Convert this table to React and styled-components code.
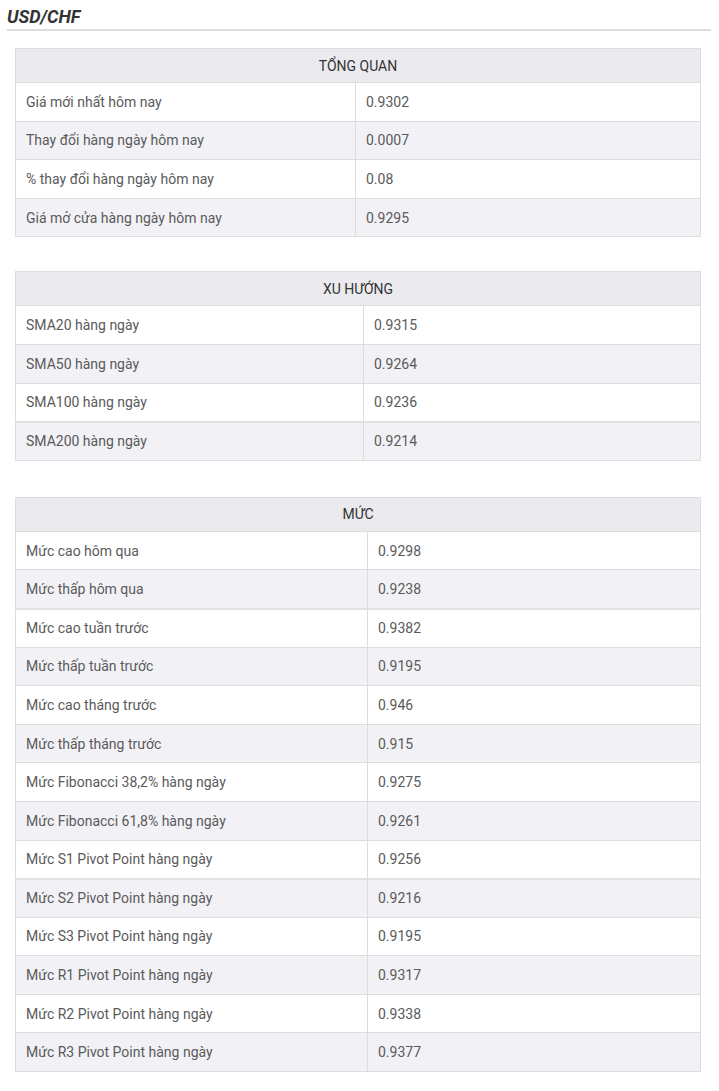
import React from "react";
import styled, { createGlobalStyle } from "styled-components";

const Global = createGlobalStyle`
  html, body { margin: 0; padding: 0; background: #fff; }
  body { font-family: Roboto, "Noto Sans", Arial, sans-serif; color: #555; }
`;

const Page = styled.div`
  padding: 5px 8px 20px 7px;
`;

const Title = styled.h2`
  margin: 0;
  padding: 0;
  font-size: 18px;
  line-height: 24px;
  font-weight: 700;
  font-style: italic;
  color: #333;
  border-bottom: 2px solid #dcdcdc;
`;

const Sections = styled.div`
  display: flex;
  flex-direction: column;
  padding: 17px 10px 0 8px;
`;

const Table = styled.table`
  width: 100%;
  margin-top: ${(p) => p.$gap || 0}px;
  border-collapse: collapse;
  font-size: 14px;
  border: 1px solid #dddddd;
  table-layout: fixed;
`;

const Head = styled.th`
  height: 33px;
  padding: 0 10px;
  background: #ebebef;
  color: #333;
  font-weight: 400;
  text-transform: uppercase;
  text-align: center;
  border-bottom: 1px solid #dddddd;
`;

const Row = styled.tr`
  background: ${(p) => (p.$odd ? "#f2f2f6" : "#ffffff")};
  & > td {
    border-top: ${(p) => (p.$thick ? "2px solid #e2e2e6" : "1px solid #dddddd")};
    height: ${(p) => (p.$thick ? "36.6px" : "37.6px")};
  }
`;

const Cell = styled.td`
  padding: 0 10px;
  color: #5a5a5a;
  line-height: 20px;
  vertical-align: middle;
  & + & {
    border-left: 1px solid #dddddd;
  }
`;

const data = [
  {
    title: "Tổng quan",
    w: 340,
    gap: 0,
    rows: [
      ["Giá mới nhất hôm nay", "0.9302"],
      ["Thay đổi hàng ngày hôm nay", "0.0007"],
      ["% thay đổi hàng ngày hôm nay", "0.08"],
      ["Giá mở cửa hàng ngày hôm nay", "0.9295"],
    ],
  },
  {
    title: "Xu hướng",
    w: 348,
    gap: 34,
    rows: [
      ["SMA20 hàng ngày", "0.9315"],
      ["SMA50 hàng ngày", "0.9264"],
      ["SMA100 hàng ngày", "0.9236"],
      ["SMA200 hàng ngày", "0.9214", true],
    ],
  },
  {
    title: "Mức",
    w: 352,
    gap: 36,
    rows: [
      ["Mức cao hôm qua", "0.9298"],
      ["Mức thấp hôm qua", "0.9238"],
      ["Mức cao tuần trước", "0.9382", true],
      ["Mức thấp tuần trước", "0.9195"],
      ["Mức cao tháng trước", "0.946"],
      ["Mức thấp tháng trước", "0.915"],
      ["Mức Fibonacci 38,2% hàng ngày", "0.9275"],
      ["Mức Fibonacci 61,8% hàng ngày", "0.9261"],
      ["Mức S1 Pivot Point hàng ngày", "0.9256"],
      ["Mức S2 Pivot Point hàng ngày", "0.9216", true],
      ["Mức S3 Pivot Point hàng ngày", "0.9195"],
      ["Mức R1 Pivot Point hàng ngày", "0.9317"],
      ["Mức R2 Pivot Point hàng ngày", "0.9338"],
      ["Mức R3 Pivot Point hàng ngày", "0.9377"],
    ],
  },
];

export default function App() {
  return (
    <Page>
      <Global />
      <Title>USD/CHF</Title>
      <Sections>
        {data.map((t) => (
          <Table key={t.title} $gap={t.gap}>
            <colgroup>
              <col style={{ width: t.w }} />
              <col />
            </colgroup>
            <thead>
              <tr>
                <Head colSpan={2}>{t.title}</Head>
              </tr>
            </thead>
            <tbody>
              {t.rows.map(([k, v, thick], i) => (
                <Row key={k} $odd={i % 2 === 1} $thick={thick}>
                  <Cell>{k}</Cell>
                  <Cell>{v}</Cell>
                </Row>
              ))}
            </tbody>
          </Table>
        ))}
      </Sections>
    </Page>
  );
}
